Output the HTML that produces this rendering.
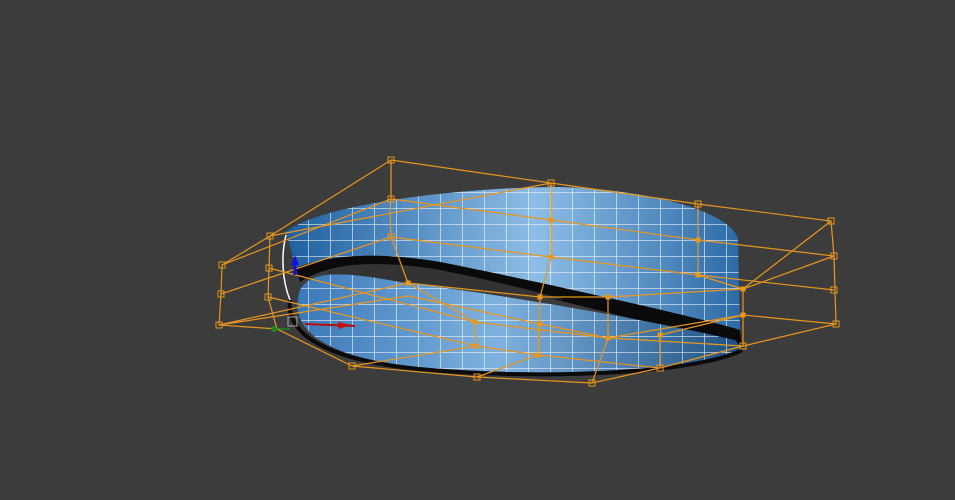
<!DOCTYPE html>
<html><head><style>
html,body{margin:0;padding:0;background:#3c3c3c;}
svg{display:block}
</style></head><body>
<svg width="955" height="500" viewBox="0 0 955 500" xmlns="http://www.w3.org/2000/svg">
<defs>
<linearGradient id="g1" x1="0" x2="1" y1="0" y2="0">
<stop offset="0" stop-color="#1f5f9f"/><stop offset="0.55" stop-color="#8dbde6"/><stop offset="1" stop-color="#2c6aa6"/>
</linearGradient>
<linearGradient id="g2" x1="0" x2="1" y1="0" y2="0">
<stop offset="0" stop-color="#3a78b8"/><stop offset="0.45" stop-color="#7fb2de"/><stop offset="1" stop-color="#1d4f80"/>
</linearGradient>
<pattern id="grid" width="22" height="16" patternUnits="userSpaceOnUse">
<path d="M0 0H22M0 0V16" stroke="#f4f9ff" stroke-width="1.3" fill="none" opacity="0.9"/>
</pattern>
</defs>
<rect width="955" height="500" fill="#3c3c3c"/>
<path d="M286,232 C320,203 470,187 560,187 C660,190 735,215 738,240 L740,330 C700,318 560,286 440,262 C380,252 330,254 296,268 Z" fill="url(#g1)"/>
<path d="M286,232 C320,203 470,187 560,187 C660,190 735,215 738,240 L740,330 C700,318 560,286 440,262 C380,252 330,254 296,268 Z" fill="url(#grid)"/>
<path d="M296,268 C330,254 380,252 440,262 C560,286 700,318 740,330 L742,348 C700,334 560,302 440,270 C380,260 330,262 300,282 Z" fill="#0a0a0a"/>
<path d="M325,272 C360,262 400,263 440,270 C490,280 540,292 565,300 C500,294 440,286 400,282 C360,278 335,276 325,272 Z" fill="#333333"/>
<path d="M300,290 C310,272 335,270 400,282 C500,294 650,320 735,340 L742,348 C700,372 560,378 430,368 C330,360 286,332 300,290 Z" fill="url(#g2)"/>
<path d="M300,290 C310,272 335,270 400,282 C500,294 650,320 735,340 L742,348 C700,372 560,378 430,368 C330,360 286,332 300,290 Z" fill="url(#grid)"/>
<path d="M290,300 C285,335 330,362 430,370 C560,380 700,372 742,350" stroke="#0a0a0a" stroke-width="4" fill="none"/>
<path d="M286,235 C281,255 282,280 290,300" stroke="#fff" stroke-width="1.5" fill="none"/>
<g stroke="#e8961e" stroke-width="1.2" fill="none">
<polyline points="222,265 270,236 391,160 551,183 698,204 831,221 834,256 836,324 743,346 660,368 592,383 477,377 352,366 277,329 219,325 221,294 222,265"/>
<polyline points="222,265 391,199 551,220 698,240 834,256"/>
<polyline points="221,294 391,237 551,257 698,275 834,290"/>
<polyline points="219,325 408,283 540,297 608,297 743,289 834,256"/>
<polyline points="219,325 408,296 540,324 608,338 743,315 836,324"/>
<polyline points="270,236 269,268 268,297 277,329"/>
<polyline points="391,160 391,199 390,211 391,237 408,283"/>
<polyline points="551,183 551,220 551,257 540,297 538,355"/>
<polyline points="698,204 698,240 698,275 743,289 743,346"/>
<polyline points="269,268 475,322 608,338 743,346"/>
<polyline points="268,297 476,346 538,355 660,368"/>
<polyline points="352,366 476,346 475,322 408,283"/>
<polyline points="592,383 608,338 608,297"/>
<polyline points="477,377 538,355 540,324"/>
<polyline points="660,368 660,335 743,315"/>
<polyline points="831,221 743,289"/>
<polyline points="270,236 551,183"/>
</g>
<g fill="#e8961e" stroke="#e8961e">
<g fill="none" stroke-width="1">
<rect x="388" y="157" width="6" height="6"/><rect x="548" y="180" width="6" height="6"/><rect x="695" y="201" width="6" height="6"/><rect x="828" y="218" width="6" height="6"/>
<rect x="267" y="233" width="6" height="6"/><rect x="219" y="262" width="6" height="6"/><rect x="218" y="291" width="6" height="6"/><rect x="216" y="322" width="6" height="6"/>
<rect x="831" y="253" width="6" height="6"/><rect x="831" y="287" width="6" height="6"/><rect x="833" y="321" width="6" height="6"/>
<rect x="349" y="363" width="6" height="6"/><rect x="474" y="374" width="6" height="6"/><rect x="589" y="380" width="6" height="6"/><rect x="657" y="365" width="6" height="6"/><rect x="740" y="343" width="6" height="6"/>
<rect x="388" y="196" width="6" height="6"/><rect x="388" y="234" width="6" height="6"/><rect x="266" y="265" width="6" height="6"/><rect x="265" y="294" width="6" height="6"/>
</g>
<rect x="549" y="218" width="4" height="4"/><rect x="549" y="255" width="4" height="4"/><rect x="696" y="238" width="4" height="4"/><rect x="696" y="273" width="4" height="4"/>
<rect x="406" y="281" width="4" height="4"/><rect x="538" y="295" width="4" height="4"/><rect x="538" y="322" width="4" height="4"/><rect x="473" y="320" width="4" height="4"/>
<rect x="606" y="336" width="4" height="4"/><rect x="606" y="295" width="4" height="4"/><rect x="741" y="287" width="4" height="4"/><rect x="741" y="313" width="4" height="4"/>
<rect x="536" y="353" width="4" height="4"/><rect x="474" y="344" width="4" height="4"/><rect x="658" y="333" width="4" height="4"/>
</g>
<line x1="295" y1="275" x2="295" y2="258" stroke="#1010e0" stroke-width="3"/>
<polygon points="291,265 299,265 295,255" fill="#1010e0"/>
<line x1="275" y1="329" x2="290" y2="329" stroke="#20a020" stroke-width="1"/>
<circle cx="274" cy="329" r="3" fill="#1c8a1c"/>
<rect x="288" y="317" width="9" height="9" fill="none" stroke="#aaa"/>
<line x1="305" y1="324" x2="355" y2="326" stroke="#b01010" stroke-width="2"/>
<polygon points="338,322 352,325 338,329" fill="#c01010"/>
</svg>
</body></html>
